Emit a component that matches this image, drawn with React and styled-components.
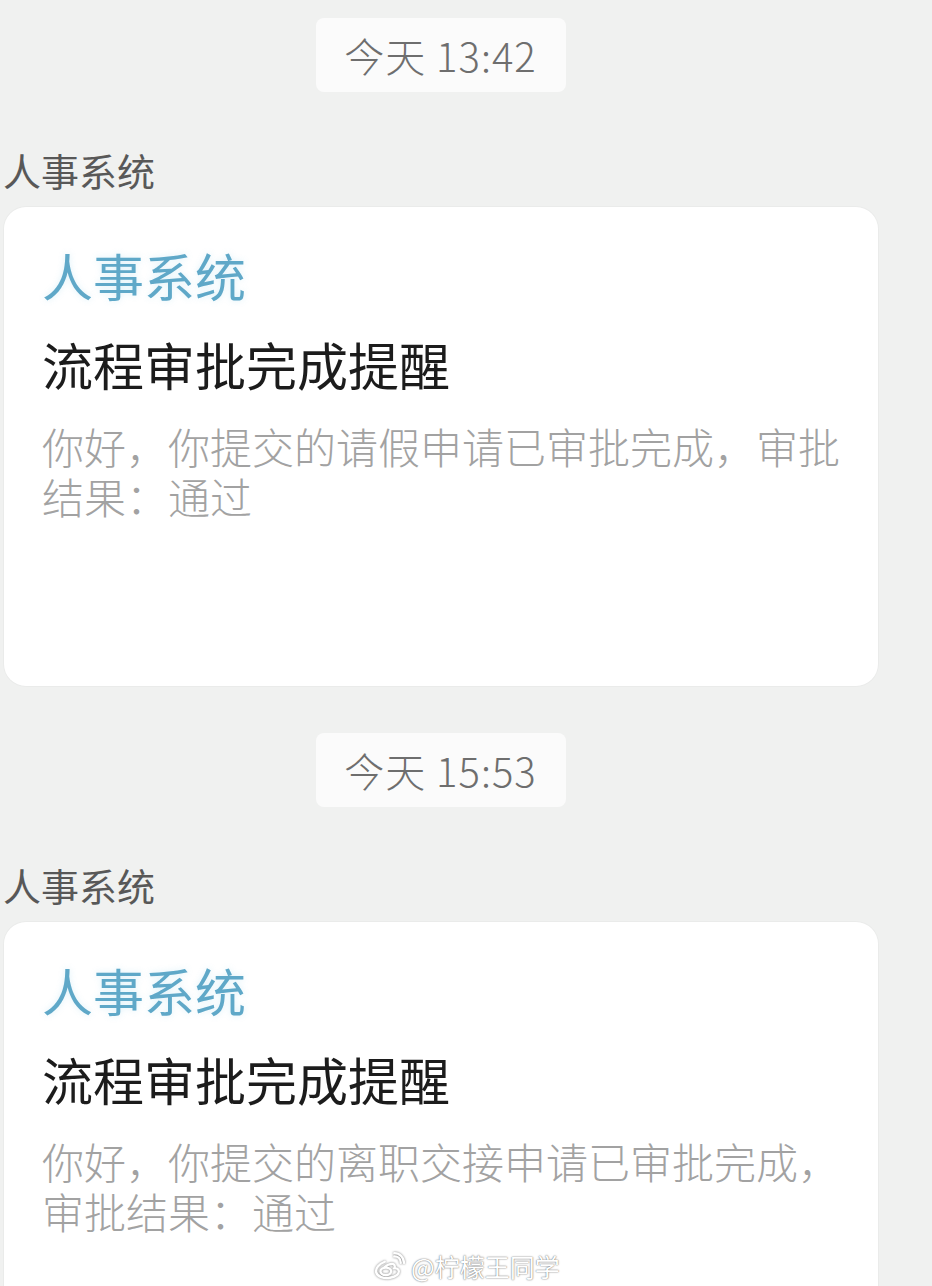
import React from "react";
import styled, { createGlobalStyle } from "styled-components";

const GlobalStyle = createGlobalStyle`
  html, body {
    margin: 0;
    padding: 0;
    background: #f0f1f0;
    overflow: hidden;
  }
  body {
    font-family: "Noto Sans CJK SC", "Noto Sans", sans-serif;
  }
`;

const Page = styled.div`
  position: relative;
  width: 932px;
  height: 1286px;
  overflow: hidden;
  background: #f0f1f0;
`;

const Column = styled.div`
  width: 874px;
  padding: 18px 0 0 4px;
  display: flex;
  flex-direction: column;
`;

const TimeRow = styled.div`
  display: flex;
  justify-content: center;
  margin-top: ${(p) => p.$gap || 0}px;
`;

const TimePill = styled.div`
  height: 74px;
  padding: 0 29px 0 28px;
  display: flex;
  align-items: center;
  background: #fbfbfb;
  border-radius: 8px;
  color: #6e6e6e;
  font-size: 40px;
  font-weight: 300;
  letter-spacing: 1px;
`;

const Sender = styled.div`
  margin: 55px 0 0 -1px;
  height: 46px;
  line-height: 46px;
  font-size: 38px;
  color: #585858;
`;

const Card = styled.div`
  margin-top: 14px;
  min-height: 479px;
  box-sizing: border-box;
  padding: 38px 30px 30px 38px;
  background: #ffffff;
  border-radius: 22px;
  box-shadow: 0 0 0 1px rgba(0, 0, 0, 0.025);
`;

const AppName = styled.div`
  font-size: 51px;
  line-height: 61px;
  color: #5fa8c8;
  text-shadow: 0 0 6px rgba(120, 200, 230, 0.25);
`;

const Heading = styled.div`
  margin-top: 28px;
  font-size: 51px;
  line-height: 60px;
  color: #1c1c1c;
`;

const Body = styled.div`
  margin-top: 27px;
  font-size: 42px;
  line-height: 50px;
  font-weight: 300;
  color: #a2a2a2;
`;

const Watermark = styled.div`
  position: absolute;
  left: 373px;
  top: 1252px;
  display: flex;
  align-items: center;
  gap: 6px;
  color: #ffffff;
  font-size: 25px;
  line-height: 28px;
  text-shadow: 0 0 2px rgba(0, 0, 0, 0.45), 0 0 1px rgba(0, 0, 0, 0.4);
  svg {
    filter: drop-shadow(0 0 1px rgba(0, 0, 0, 0.5));
  }
`;

const WeiboLogo = () => (
  <svg width="32" height="28" viewBox="0 0 30 26" fill="none" stroke="#fff" strokeWidth="2.2" strokeLinecap="round">
    <path d="M11 9c-5 2-9 6-8 10 1 4 7 6 13 5 6-1 9-4 8-7-1-2-3-2-4-2 1-2 0-4-2-4-2 0-5 1-7 3" />
    <ellipse cx="12" cy="18" rx="5" ry="3.5" />
    <path d="M20 4c3 0 6 2 6 6" />
    <path d="M20 1c5 0 9 4 9 9" />
  </svg>
);

const messages = [
  {
    time: "今天 13:42",
    body: "你好，你提交的请假申请已审批完成，审批结果：通过",
  },
  {
    time: "今天 15:53",
    body: "你好，你提交的离职交接申请已审批完成，审批结果：通过",
  },
];

const App = () => {
  return (
    <Page>
      <GlobalStyle />
      <Column>
        {messages.map((m, i) => (
          <React.Fragment key={m.time}>
            <TimeRow $gap={i === 0 ? 0 : 47}>
              <TimePill>{m.time}</TimePill>
            </TimeRow>
            <Sender>人事系统</Sender>
            <Card>
              <AppName>人事系统</AppName>
              <Heading>流程审批完成提醒</Heading>
              <Body>{m.body}</Body>
            </Card>
          </React.Fragment>
        ))}
      </Column>
      <Watermark>
        <WeiboLogo />
        <span>@柠檬王同学</span>
      </Watermark>
    </Page>
  );
};

export default App;
